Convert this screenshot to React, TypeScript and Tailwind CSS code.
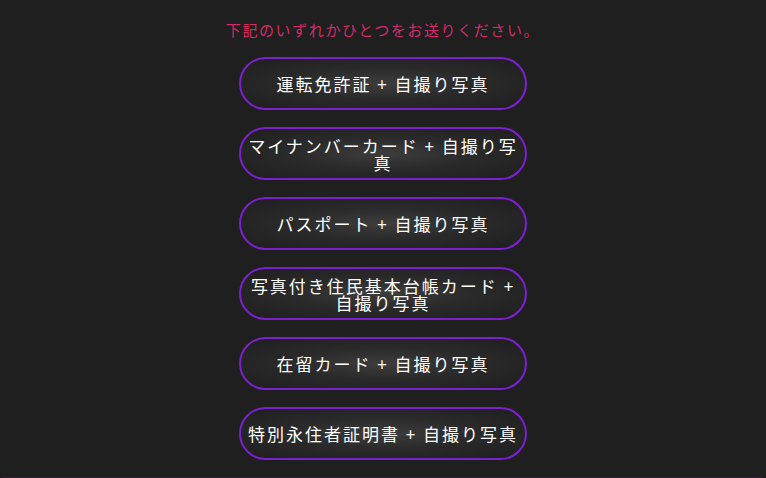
import React from "react";

const items = [
  "運転免許証 + 自撮り写真",
  "マイナンバーカード + 自撮り写真",
  "パスポート + 自撮り写真",
  "写真付き住民基本台帳カード + 自撮り写真",
  "在留カード + 自撮り写真",
  "特別永住者証明書 + 自撮り写真",
];

export default function App() {
  return (
    <div className="w-[766px] h-[478px] bg-[#1c1c1c]">
      <div
        className="w-[766px] h-[478px] bg-[#1f1f1f] rounded-b-[6px] border-b border-[#34203f] flex flex-col items-center pt-[20px]"
        style={{ fontFamily: '"Noto Sans CJK JP", "Noto Sans", sans-serif' }}
      >
        <p className="text-[15px] leading-[20px] text-[#d42a68] tracking-[1.6px]">
          下記のいずれかひとつをお送りください。
        </p>
        <div className="mt-[17px] flex flex-col gap-[17px]">
          {items.map((t) => (
            <div
              key={t}
              className="w-[288px] h-[53px] rounded-full border-2 border-[#7c1fcf] flex items-center justify-center text-center px-0 text-white text-[17px] leading-[17px] tracking-[2px] bg-[radial-gradient(ellipse_at_center,#3d3d3d_0%,#2a2a2a_45%,#1e1e1e_100%)]"
            >
              <span>{t}</span>
            </div>
          ))}
        </div>
      </div>
    </div>
  );
}
